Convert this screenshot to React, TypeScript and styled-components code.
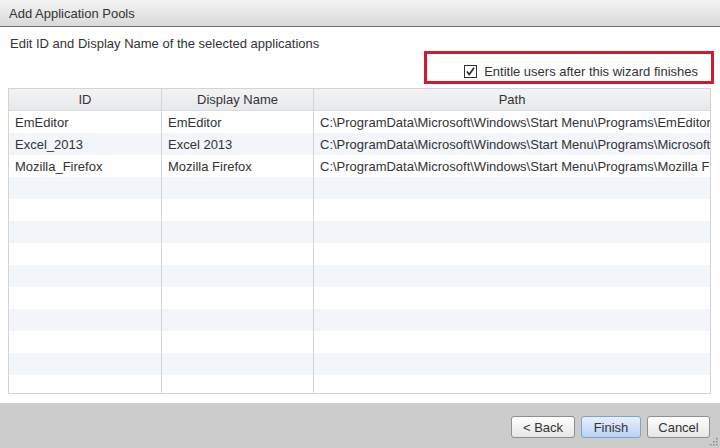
import styled, { createGlobalStyle } from 'styled-components';

const GlobalStyle = createGlobalStyle`
  html, body {
    margin: 0;
    padding: 0;
  }
  body {
    font-family: "Liberation Sans", Arial, sans-serif;
    font-size: 13px;
    color: #333;
  }
`;

const Dialog = styled.div`
  display: flex;
  flex-direction: column;
  width: 720px;
  height: 448px;
  overflow: hidden;
  background: #fff;
`;

const TitleBar = styled.div`
  flex-shrink: 0;
  display: flex;
  align-items: center;
  height: 26px;
  padding-left: 9px;
  background: linear-gradient(#f4f4f4, #d9d9d9);
  border-bottom: 1px solid #6f6f6f;
  color: #333;
`;

const Body = styled.div`
  flex: 1;
  min-height: 0;
  display: flex;
  flex-direction: column;
  padding: 10px 6px 9px 8px;
`;

const Instruction = styled.div`
  flex-shrink: 0;
  height: 14px;
  line-height: 14px;
  padding-left: 2px;
`;

const EntitleBox = styled.label`
  flex-shrink: 0;
  align-self: flex-end;
  display: flex;
  align-items: center;
  justify-content: flex-end;
  gap: 7px;
  box-sizing: border-box;
  width: 290px;
  height: 33px;
  padding: 7px 13px 0 0;
  border: 3px solid #d3192b;
`;

const Check = styled.svg`
  width: 13px;
  height: 13px;
  flex-shrink: 0;
`;

const Table = styled.div`
  flex: 1;
  min-height: 0;
  margin-top: 4px;
  margin-right: 3px;
  border: 1px solid #d4d4d4;
  overflow: hidden;
`;

const Row = styled.div<{ $shade?: boolean }>`
  display: grid;
  grid-template-columns: 152px 152px 1fr;
  height: 22px;
  background: ${(p) => (p.$shade ? '#f2f5fa' : '#fff')};
`;

const HeaderRow = styled(Row)`
  height: 21px;
  background: linear-gradient(#f2f3f5, #e6e9ec);
  border-bottom: 1px solid #dcdcdc;
`;

const Cell = styled.div<{ $head?: boolean }>`
  display: flex;
  align-items: center;
  justify-content: ${(p) => (p.$head ? 'center' : 'flex-start')};
  padding: 0 6px;
  border-left: 1px solid #d4d4d4;
  white-space: nowrap;
  overflow: hidden;

  &:first-child {
    border-left: none;
  }
`;

const Footer = styled.div`
  flex-shrink: 0;
  position: relative;
  display: flex;
  justify-content: flex-end;
  align-items: flex-start;
  gap: 6px;
  height: 45px;
  box-sizing: border-box;
  padding: 13px 10px 0 0;
  background: #cccccc;
`;

const Button = styled.button<{ $primary?: boolean; $w: number }>`
  width: ${(p) => p.$w}px;
  height: 22px;
  padding: 0;
  border-radius: 3px;
  border: 1px solid ${(p) => (p.$primary ? '#7fa3cf' : '#8f8f8f')};
  background: ${(p) =>
    p.$primary
      ? 'linear-gradient(#e6f0fc, #b9d3f3)'
      : 'linear-gradient(#ffffff, #e6e6e6)'};
  font-family: "Liberation Sans", Arial, sans-serif;
  font-size: 13px;
  color: #333;
`;

const Grip = styled.svg`
  position: absolute;
  right: 1px;
  bottom: 1px;
  width: 10px;
  height: 10px;
`;

const rows = [
  {
    id: 'EmEditor',
    name: 'EmEditor',
    path: 'C:\\ProgramData\\Microsoft\\Windows\\Start Menu\\Programs\\EmEditor\\EmEditor.lnk',
  },
  {
    id: 'Excel_2013',
    name: 'Excel 2013',
    path: 'C:\\ProgramData\\Microsoft\\Windows\\Start Menu\\Programs\\Microsoft Office 2013\\Excel 2013.lnk',
  },
  {
    id: 'Mozilla_Firefox',
    name: 'Mozilla Firefox',
    path: 'C:\\ProgramData\\Microsoft\\Windows\\Start Menu\\Programs\\Mozilla Firefox.lnk',
  },
];

const blanks = Array.from({ length: 11 });

export default function App() {
  return (
    <>
      <GlobalStyle />
      <Dialog>
        <TitleBar>Add Application Pools</TitleBar>
        <Body>
          <Instruction>Edit ID and Display Name of the selected applications</Instruction>
          <EntitleBox>
            <Check viewBox="0 0 13 13">
              <rect x="0.5" y="0.5" width="12" height="12" fill="#fff" stroke="#333" />
              <path d="M3 6.5 L5.3 9.5 L10 2.8" fill="none" stroke="#222" strokeWidth="1.6" />
            </Check>
            <span>Entitle users after this wizard finishes</span>
          </EntitleBox>
          <Table>
            <HeaderRow>
              <Cell $head>ID</Cell>
              <Cell $head>Display Name</Cell>
              <Cell $head>Path</Cell>
            </HeaderRow>
            {rows.map((r, i) => (
              <Row key={r.id} $shade={i % 2 === 1}>
                <Cell>{r.id}</Cell>
                <Cell>{r.name}</Cell>
                <Cell>{r.path}</Cell>
              </Row>
            ))}
            {blanks.map((_, i) => (
              <Row key={i} $shade={(i + rows.length) % 2 === 1}>
                <Cell />
                <Cell />
                <Cell />
              </Row>
            ))}
          </Table>
        </Body>
        <Footer>
          <Button $w={64}>&lt; Back</Button>
          <Button $w={60} $primary>Finish</Button>
          <Button $w={63}>Cancel</Button>
          <Grip viewBox="0 0 10 10">
            <g fill="#888">
              <rect x="7" y="1" width="1.5" height="1.5" />
              <rect x="4" y="4" width="1.5" height="1.5" />
              <rect x="7" y="4" width="1.5" height="1.5" />
              <rect x="1" y="7" width="1.5" height="1.5" />
              <rect x="4" y="7" width="1.5" height="1.5" />
              <rect x="7" y="7" width="1.5" height="1.5" />
            </g>
          </Grip>
        </Footer>
      </Dialog>
    </>
  );
}
